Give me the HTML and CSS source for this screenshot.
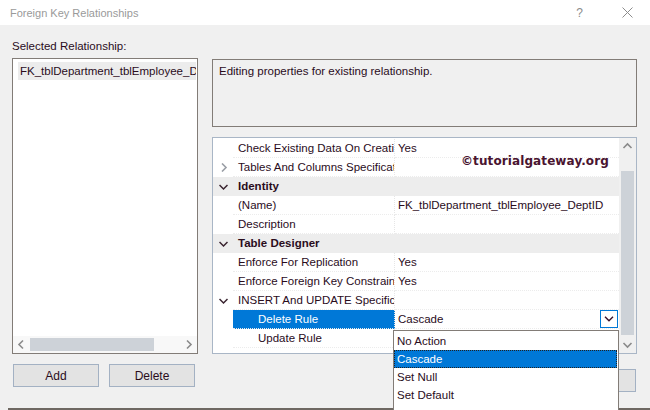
FILE: index.html
```html
<!DOCTYPE html>
<html>
<head>
<meta charset="utf-8">
<link rel="stylesheet" href="styles.css">
</head>
<body>
<div class="window">
  <div class="titlebar">
    <span class="title">Foreign Key Relationships</span>
    <span class="help">?</span>
    <svg class="xclose" width="11" height="11" viewBox="0 0 11 11"><path d="M0.5 0.5 L10.5 10.5 M10.5 0.5 L0.5 10.5" stroke="#8c8c8c" stroke-width="1" fill="none"/></svg>
  </div>
  <div class="content">
    <div class="left">
      <div class="label">Selected Relationship:</div>
      <div class="listbox">
        <div class="list-items">
          <div class="list-item">FK_tblDepartment_tblEmployee_DeptID</div>
        </div>
        <div class="hscroll">
          <svg class="arrow" width="17" height="17" viewBox="0 0 17 17"><path d="M10 4.5 L6 8.5 L10 12.5" stroke="#8a8a8a" stroke-width="1.6" fill="none"/></svg>
          <div class="htrack"><div class="hthumb"></div></div>
          <svg class="arrow" width="17" height="17" viewBox="0 0 17 17"><path d="M7 4.5 L11 8.5 L7 12.5" stroke="#8a8a8a" stroke-width="1.6" fill="none"/></svg>
        </div>
      </div>
      <div class="buttons">
        <button class="btn">Add</button>
        <button class="btn">Delete</button>
      </div>
    </div>
    <div class="right">
      <div class="desc">Editing properties for existing relationship.</div>
      <div class="grid">
        <div class="rows">
          <div class="row"><span class="gut"></span><span class="name">Check Existing Data On Creation Or Re-Enabling</span><span class="val">Yes</span></div>
          <div class="row"><span class="gut"><svg width="8" height="9" viewBox="0 0 8 9"><path d="M2 0.5 L6 4.5 L2 8.5" stroke="#9a9ea6" stroke-width="1.6" fill="none"/></svg></span><span class="name">Tables And Columns Specification</span><span class="val"></span></div>
          <div class="row cat"><span class="gut"><svg width="9" height="8" viewBox="0 0 9 8"><path d="M0.5 2 L4.5 6 L8.5 2" stroke="#3a2430" stroke-width="1.5" fill="none"/></svg></span><span class="name">Identity</span><span class="val"></span></div>
          <div class="row"><span class="gut"></span><span class="name">(Name)</span><span class="val">FK_tblDepartment_tblEmployee_DeptID</span></div>
          <div class="row"><span class="gut"></span><span class="name">Description</span><span class="val"></span></div>
          <div class="row cat"><span class="gut"><svg width="9" height="8" viewBox="0 0 9 8"><path d="M0.5 2 L4.5 6 L8.5 2" stroke="#3a2430" stroke-width="1.5" fill="none"/></svg></span><span class="name">Table Designer</span><span class="val"></span></div>
          <div class="row"><span class="gut"></span><span class="name">Enforce For Replication</span><span class="val">Yes</span></div>
          <div class="row"><span class="gut"></span><span class="name">Enforce Foreign Key Constraint</span><span class="val">Yes</span></div>
          <div class="row"><span class="gut"><svg width="9" height="8" viewBox="0 0 9 8"><path d="M0.5 2 L4.5 6 L8.5 2" stroke="#3a2430" stroke-width="1.5" fill="none"/></svg></span><span class="name">INSERT And UPDATE Specification</span><span class="val"></span></div>
          <div class="row"><span class="gut"></span><span class="name sel sub">Delete Rule</span><span class="val combo"><span class="combo-text">Cascade</span><span class="combo-btn"><svg width="10" height="6" viewBox="0 0 10 6"><path d="M1 0.8 L5 4.8 L9 0.8" stroke="#3a1028" stroke-width="1.4" fill="none"/></svg></span></span></div>
          <div class="row"><span class="gut"></span><span class="name sub">Update Rule</span><span class="val"></span></div>
        </div>
        <div class="vscroll">
          <svg class="arrow" width="17" height="17" viewBox="0 0 17 17"><path d="M4.5 10 L8.5 6 L12.5 10" stroke="#8a8a8a" stroke-width="1.6" fill="none"/></svg>
          <div class="vtrack"><div class="vthumb"></div></div>
          <svg class="arrow" width="17" height="17" viewBox="0 0 17 17"><path d="M4.5 7 L8.5 11 L12.5 7" stroke="#8a8a8a" stroke-width="1.6" fill="none"/></svg>
        </div>
      </div>
      <div class="right-buttons">
        <button class="btn">Close</button>
      </div>
    </div>
  </div>
  <div class="footer-line"></div>

  <div class="watermark">©tutorialgateway.org</div>

  <div class="dropdown">
    <div class="opt">No Action</div>
    <div class="opt active">Cascade</div>
    <div class="opt">Set Null</div>
    <div class="opt">Set Default</div>
  </div>
</div>
</body>
</html>
```

FILE: styles.css
```css
* { box-sizing: border-box; }
html, body { margin: 0; padding: 0; }
body {
  background: #f0f0f0;
  font-family: "Segoe UI", "Liberation Sans", Arial, sans-serif;
  font-size: 11.5px;
  color: #2a0c1c;
}
.window {
  position: relative;
  width: 650px;
  height: 410px;
  background: #f0f0f0;
  display: flex;
  flex-direction: column;
  overflow: hidden;
}
.titlebar {
  height: 25px;
  background: #ffffff;
  display: flex;
  align-items: center;
  padding-left: 10px;
  flex: none;
}
.title { color: #9a9a9a; flex: 1; font-size: 11px; }
.help { color: #8c8c8c; margin-right: 39px; font-size: 12px; }
.xclose { margin-right: 17px; }

.content {
  flex: 1;
  display: flex;
  gap: 14px;
  padding-left: 12px;
}
.left {
  width: 186px;
  display: flex;
  flex-direction: column;
}
.label {
  margin-top: 13px;
  height: 16px;
  line-height: 16px;
  margin-bottom: 4px;
}
.listbox {
  height: 296px;
  border: 1px solid #827c77;
  background: #ffffff;
  display: flex;
  flex-direction: column;
}
.list-items {
  flex: 1;
  padding: 3px 1px 0 5px;
  overflow: hidden;
}
.list-item {
  height: 18px;
  line-height: 19px;
  padding-left: 2px;
  background: #ececec;
  white-space: nowrap;
  overflow: hidden;
}
.hscroll {
  height: 17px;
  display: flex;
  align-items: center;
  background: #f8f8f8;
}
.hscroll .arrow { flex: none; }
.htrack { flex: 1; height: 13px; display: flex; }
.hthumb { width: 124px; height: 13px; background: #cdd2d8; }

.buttons {
  display: flex;
  gap: 10px;
  margin-top: 10px;
  padding-left: 1px;
}
.btn {
  width: 86px;
  height: 23px;
  border: 1px solid #a3b1c3;
  background: #e3e3e3;
  font-family: inherit;
  font-size: 12px;
  color: #2a0c1c;
  padding: 0;
}

.right {
  width: 425px;
  display: flex;
  flex-direction: column;
  padding-top: 34px;
}
.desc {
  height: 68px;
  border: 1px solid #827c77;
  padding: 3px 6px;
  line-height: 16px;
}
.grid {
  margin-top: 10px;
  height: 217px;
  border: 1px solid #a9b6c6;
  background: #ffffff;
  display: flex;
}
.rows { flex: 1; padding-top: 1px; }
.row {
  display: flex;
  height: 19px;
  line-height: 19px;
}
.gut {
  width: 20px;
  flex: none;
  display: flex;
  align-items: center;
  justify-content: center;
  padding-left: 1px;
}
.name {
  width: 162px;
  flex: none;
  padding-left: 5px;
  white-space: nowrap;
  overflow: hidden;
  border-right: 1px dotted #e6e6e6;
  border-bottom: 1px dotted #ececec;
}
.name.sub { padding-left: 25px; }
.name.sel { background: #0078d7; color: #ffffff; }
.val {
  flex: 1;
  padding-left: 3px;
  white-space: nowrap;
  overflow: hidden;
  border-bottom: 1px dotted #ececec;
}
.row.cat { background: #ededed; font-weight: bold; }
.row.cat .name, .row.cat .val { border-color: #ededed; }
.combo { display: flex; align-items: center; padding-right: 1px; }
.combo-text { flex: 1; }
.combo-btn {
  width: 18px;
  height: 18px;
  border: 1px solid #0078d7;
  display: flex;
  align-items: center;
  justify-content: center;
  background: #ffffff;
}
.vscroll {
  width: 17px;
  flex: none;
  background: #f0f0f0;
  display: flex;
  flex-direction: column;
}
.vtrack { flex: 1; padding: 16px 2px 0 2px; }
.vthumb { height: 164px; background: #cdd2d8; }

.right-buttons {
  display: flex;
  justify-content: flex-end;
  margin-top: 15px;
  padding-right: 1px;
}

.footer-line {
  height: 2px;
  margin-left: 8px;
  background: #6e6862;
  flex: none;
}

.watermark {
  position: absolute;
  left: 461px;
  top: 154px;
  font-family: "DejaVu Sans", Verdana, sans-serif;
  font-weight: bold;
  font-size: 12px;
  color: #4a1430;
  letter-spacing: 0.1px;
}

.dropdown {
  position: absolute;
  left: 393px;
  top: 330px;
  width: 226px;
  height: 90px;
  border: 1px solid #827c77;
  background: #ffffff;
  padding-top: 1px;
}
.opt {
  height: 18px;
  line-height: 18px;
  padding-left: 3px;
}
.opt.active {
  background: #0078d7;
  color: #ffffff;
  border: 1px dotted #222;
  line-height: 16px;
  padding-left: 2px;
  margin-right: 1px;
}
```
